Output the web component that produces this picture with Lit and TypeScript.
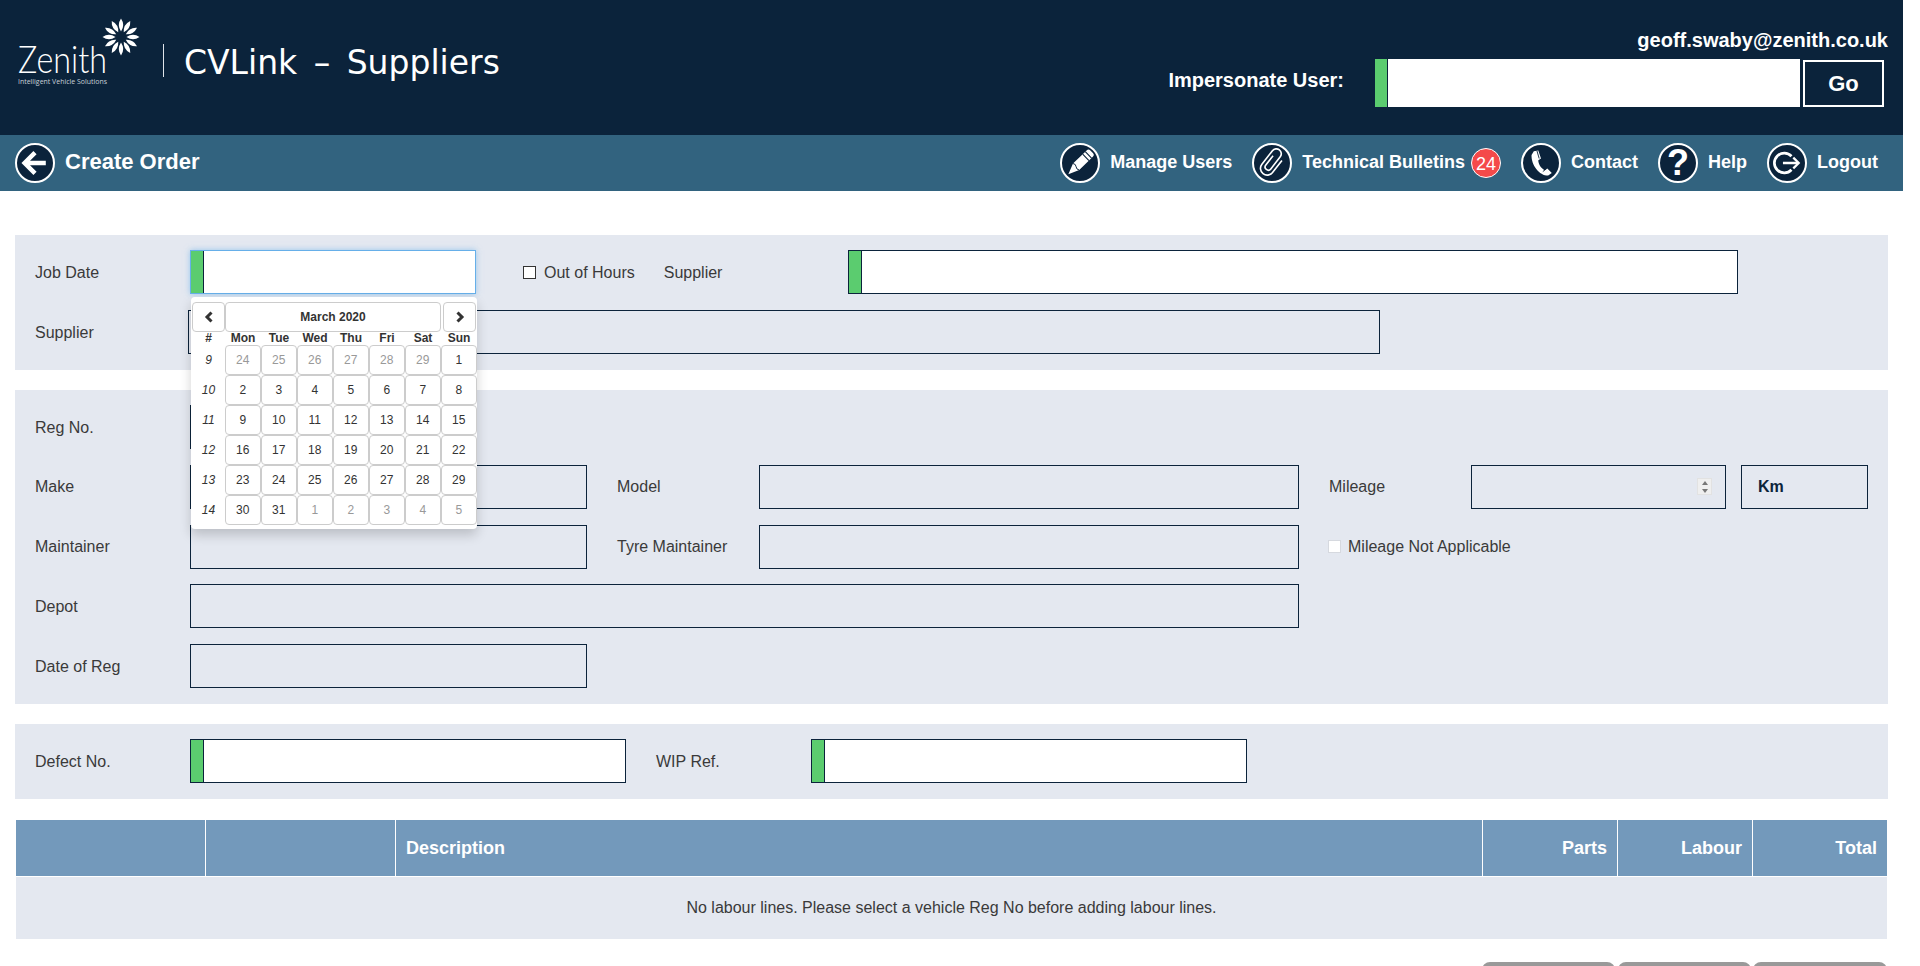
import { LitElement, css, html, svg } from "lit";
import { customElement } from "lit/decorators.js";

const navy = "#0b233b";

const icons = {
  back: svg`<path d="M20 8.500 8.500 20 20 31.500M10 20h22" fill="none" stroke="#fff" stroke-width="5"/>`,
  pencil: svg`<g transform="rotate(46 20 20)"><path d="M20 38 15 26V5q0-3 3-3h4q3 0 3 3v21z" fill="#fff"/><path d="M15 7h10M15 11h10" stroke="${navy}" stroke-width="1.200"/><path d="M15 26q2.500-2 5 0t5 0" fill="none" stroke="${navy}" stroke-width="1"/></g>`,
  clip: svg`<path transform="rotate(38 20 20)" d="M27 11v17a7.500 7.500 0 0 1-15 0V9a5.500 5.500 0 0 1 11 0v17a3.500 3.500 0 0 1-7 0V13" fill="none" stroke="#fff" stroke-width="1.800"/>`,
  phone: svg`<path d="M12 7l5-1 3 9-3 2c0 4 3 9 7 11l3-2 5 5-4 3C18 34 9 22 9.500 11z" fill="#fff"/><path d="M15.500 6.500 18 15M26 26.500l-4 3" stroke="${navy}" stroke-width="1"/>`,
  logout: svg`<path d="M25 12.500A11 11 0 1 0 25 27.500" fill="none" stroke="#fff" stroke-width="3"/><path d="M15.500 20H32" stroke="#fff" stroke-width="3"/><path d="M27 14l6 6-6 6" fill="none" stroke="#fff" stroke-width="2.500"/>`,
};

type Day = { n: number; muted?: boolean };
const weeks: { no: number; days: Day[] }[] = [
  { no: 9, days: [24, 25, 26, 27, 28, 29].map((n) => ({ n, muted: true } as Day)).concat([{ n: 1 }]) },
  { no: 10, days: [2, 3, 4, 5, 6, 7, 8].map((n) => ({ n })) },
  { no: 11, days: [9, 10, 11, 12, 13, 14, 15].map((n) => ({ n })) },
  { no: 12, days: [16, 17, 18, 19, 20, 21, 22].map((n) => ({ n })) },
  { no: 13, days: [23, 24, 25, 26, 27, 28, 29].map((n) => ({ n })) },
  {
    no: 14,
    days: [{ n: 30 }, { n: 31 }].concat([1, 2, 3, 4, 5].map((n) => ({ n, muted: true } as Day))),
  },
];

@customElement("app-root")
export class AppRoot extends LitElement {
  private icon(name: keyof typeof icons) {
    return html`<svg class="icon" viewBox="0 0 40 40">${icons[name]}</svg>`;
  }

  private logo() {
    const petals = Array.from({ length: 12 }, (_, i) => i * 30);
    return html`<svg class="logo" viewBox="0 0 125 75">
      ${petals.map(
        (a) => svg`<path d="M103 3.500Q107.400 10 103 16.500Q98.600 10 103 3.500z" fill="#fff" transform="rotate(${a} 103 22)"/>`
      )}
      <text class="zenith" x="0" y="58" textLength="89" lengthAdjust="spacingAndGlyphs">Zenith</text>
      <text class="tagline" x="0" y="69" textLength="89" lengthAdjust="spacingAndGlyphs">Intelligent Vehicle Solutions</text>
    </svg>`;
  }

  private calendar() {
    return html`<div class="cal">
      <div class="cal-top">
        <button class="cal-btn prev">
          <svg viewBox="0 0 10 12"><path d="M7.500 1.500 3 6l4.500 4.500" fill="none" stroke="#333" stroke-width="3"/></svg>
        </button>
        <button class="cal-btn month">March 2020</button>
        <button class="cal-btn next">
          <svg viewBox="0 0 10 12"><path d="M2.500 1.500 7 6l-4.500 4.500" fill="none" stroke="#333" stroke-width="3"/></svg>
        </button>
      </div>
      <div class="cal-grid">
        <span class="dow">#</span>
        ${["Mon", "Tue", "Wed", "Thu", "Fri", "Sat", "Sun"].map((d) => html`<span class="dow">${d}</span>`)}
        ${weeks.map(
          (w) => html`<span class="wk">${w.no}</span>
            ${w.days.map((d) => html`<button class="day ${d.muted ? "muted" : ""}">${d.n}</button>`)}`
        )}
      </div>
    </div>`;
  }

  render() {
    return html`
      <header class="top">
        ${this.logo()}
        <span class="rule"></span>
        <h1 class="title">CVLink – Suppliers</h1>
        <div class="account">
          <div class="email">geoff.swaby@zenith.co.uk</div>
          <div class="imp">
            <label>Impersonate User:</label>
            <div class="imp-box"><i class="imp-mark"></i><input /></div>
            <button class="go">Go</button>
          </div>
        </div>
      </header>

      <nav class="bar">
        <a class="nav first">${this.icon("back")}<b class="crumb">Create Order</b></a>
        <div class="nav-right">
          <a class="nav">${this.icon("pencil")}<b>Manage Users</b></a>
          <a class="nav">${this.icon("clip")}<b>Technical Bulletins</b><span class="badge">24</span></a>
          <a class="nav">${this.icon("phone")}<b>Contact</b></a>
          <a class="nav"><span class="icon q">?</span><b>Help</b></a>
          <a class="nav">${this.icon("logout")}<b>Logout</b></a>
        </div>
      </nav>

      <section class="panel first-panel">
        <div class="row">
          <label class="lab">Job Date</label>
          <div class="field req focus w286">
            <i class="mark"></i><input />
            ${this.calendar()}
          </div>
          <span class="check out"></span>
          <label class="check-lab">Out of Hours</label>
          <label class="lab-sup">Supplier</label>
          <div class="field req w890"><i class="mark"></i><input /></div>
        </div>
        <div class="row">
          <label class="lab short">Supplier</label>
          <div class="field w1192"><input /></div>
        </div>
      </section>

      <section class="panel vehicle">
        <div class="row">
          <label class="lab">Reg No.</label>
          <div class="field req w286"><i class="mark"></i><input /></div>
        </div>
        <div class="row">
          <label class="lab">Make</label>
          <div class="field w397"><input /></div>
          <label class="lab-mid">Model</label>
          <div class="field w540"><input /></div>
          <label class="lab-far">Mileage</label>
          <div class="field w255">
            <input />
            <span class="spin"><i class="up"></i><i class="down"></i></span>
          </div>
          <div class="unit">Km</div>
        </div>
        <div class="row">
          <label class="lab">Maintainer</label>
          <div class="field w397"><input /></div>
          <label class="lab-mid">Tyre Maintainer</label>
          <div class="field w540"><input /></div>
          <span class="check na"></span>
          <label class="check-lab">Mileage Not Applicable</label>
        </div>
        <div class="row">
          <label class="lab">Depot</label>
          <div class="field w1109"><input /></div>
        </div>
        <div class="row">
          <label class="lab">Date of Reg</label>
          <div class="field w397"><input /></div>
        </div>
      </section>

      <section class="panel">
        <div class="row">
          <label class="lab">Defect No.</label>
          <div class="field req w436"><i class="mark"></i><input /></div>
          <label class="lab-wip">WIP Ref.</label>
          <div class="field req w436"><i class="mark"></i><input /></div>
        </div>
      </section>

      <div class="lines">
        <div class="head"></div>
        <div class="head"></div>
        <div class="head">Description</div>
        <div class="head num">Parts</div>
        <div class="head num">Labour</div>
        <div class="head num">Total</div>
        <div class="empty">No labour lines. Please select a vehicle Reg No before adding labour lines.</div>
      </div>

      <div class="actions">
        <button class="act a1"></button>
        <button class="act a2"></button>
        <button class="act a3"></button>
      </div>
    `;
  }

  static styles = css`
    :host {
      --navy: #0b233b;
      display: block;
      width: 1903px;
      height: 966px;
      overflow: hidden;
      background: #fff;
      font-family: "Liberation Sans", Arial, sans-serif;
      font-size: 16px;
      color: #3a3a3a;
    }
    * {
      box-sizing: border-box;
    }

    .top {
      height: 135px;
      background: var(--navy);
      display: flex;
      align-items: flex-start;
      color: #fff;
    }
    .logo {
      width: 125px;
      height: 75px;
      margin: 15px 0 0 18px;
      flex: none;
    }
    .zenith {
      font-family: Lato, "Open Sans", sans-serif;
      font-weight: 300;
      font-size: 38px;
      fill: #fff;
    }
    .tagline {
      font-family: "Open Sans", sans-serif;
      font-size: 7px;
      fill: #c9d0d8;
    }
    .rule {
      width: 1px;
      height: 33px;
      margin: 44px 0 0 20px;
      background: #dfe4ea;
    }
    .title {
      margin: 43px 0 0 20px;
      font: 400 33px/40px "DejaVu Sans", Verdana, sans-serif;
      word-spacing: 6px;
      white-space: nowrap;
    }
    .account {
      margin-left: auto;
      padding-right: 15px;
      display: flex;
      flex-direction: column;
      align-items: flex-end;
    }
    .email {
      margin-top: 28px;
      font-size: 20px;
      font-weight: 700;
      line-height: 24px;
      height: 31px;
    }
    .imp {
      display: flex;
      align-items: center;
      margin-right: 4px;
    }
    .imp label {
      font-size: 20px;
      font-weight: 700;
      margin-right: 31px;
      padding: 0 0 5px;
    }
    .imp-box {
      width: 425px;
      height: 48px;
      display: flex;
      background: #fff;
    }
    .imp-mark {
      width: 13px;
      background: #5bcc6f;
      border-right: 1px solid var(--navy);
    }
    .imp-box input {
      flex: 1;
      min-width: 0;
      border: 0;
      outline: 0;
      background: transparent;
    }
    .go {
      width: 81px;
      height: 47px;
      margin-left: 3px;
      padding: 2px 0 0;
      border: 2px solid #fff;
      background: transparent;
      color: #fff;
      font: 700 22px "Liberation Sans", Arial, sans-serif;
    }

    .bar {
      height: 56px;
      background: #32637f;
      display: flex;
      align-items: center;
      color: #fff;
      padding: 0 25px 0 15px;
    }
    .nav-right {
      margin-left: auto;
      display: flex;
      gap: 20px;
    }
    .nav {
      display: flex;
      align-items: center;
      gap: 10px;
      font-size: 18px;
    }
    .nav b {
      padding-bottom: 2px;
    }
    .crumb {
      font-size: 22px;
    }
    .icon {
      width: 40px;
      height: 40px;
      flex: none;
      border-radius: 50%;
      border: 2px solid #fff;
      background: var(--navy);
      display: block;
    }
    .q {
      font-size: 36px;
      font-weight: 700;
      line-height: 36px;
      text-align: center;
      color: #fff;
    }
    .badge {
      width: 30px;
      height: 30px;
      margin-left: -4px;
      border-radius: 50%;
      background: #f44a4a;
      border: 1px solid #fff;
      font-size: 18px;
      line-height: 30px;
      text-align: center;
      color: #fff;
    }

    .panel {
      display: flow-root;
      margin: 20px 15px 0;
      width: 1873px;
      background: #e4e8f0;
      padding: 15px 0 0 20px;
    }
    .first-panel {
      margin-top: 44px;
    }
    .row {
      height: 44px;
      margin-bottom: 16px;
      display: flex;
      align-items: center;
    }
    .vehicle .row {
      margin-bottom: 15.750px;
    }
    label {
      padding-top: 2px;
    }
    .vehicle .row:nth-child(2) label,
    .vehicle .row:nth-child(3) label {
      padding-top: 0;
    }
    .lab {
      width: 155px;
      flex: none;
    }
    .lab.short {
      width: 153px;
    }
    .lab-mid {
      width: 142px;
      margin-left: 30px;
      flex: none;
    }
    .lab-far {
      width: 142px;
      margin-left: 30px;
      flex: none;
    }
    .lab-sup {
      width: 184px;
      margin-left: 29px;
      flex: none;
    }
    .lab-wip {
      width: 155px;
      margin-left: 30px;
      flex: none;
    }

    .field {
      position: relative;
      height: 44px;
      flex: none;
      display: flex;
      align-items: center;
      border: 1px solid var(--navy);
    }
    .field input {
      flex: 1;
      min-width: 0;
      height: 100%;
      border: 0;
      outline: 0;
      background: transparent;
    }
    .field.req {
      background: #fff;
    }
    .field.focus {
      border-color: #66afe9;
      box-shadow: 0 0 6px rgba(102, 175, 233, 0.6);
    }
    .mark {
      width: 13px;
      height: 100%;
      flex: none;
      background: #5bcc6f;
      border-right: 1px solid var(--navy);
    }
    .w286 {
      width: 286px;
    }
    .w397 {
      width: 397px;
    }
    .w436 {
      width: 436px;
    }
    .w255 {
      width: 255px;
    }
    .w540 {
      width: 540px;
    }
    .w890 {
      width: 890px;
    }
    .w1109 {
      width: 1109px;
    }
    .w1192 {
      width: 1192px;
    }

    .spin {
      width: 15px;
      height: 17px;
      margin-right: 13px;
      flex: none;
      display: flex;
      flex-direction: column;
      align-items: center;
      justify-content: space-around;
      background: #efefef;
      border: 1px solid #e2e2e2;
    }
    .spin i {
      width: 0;
      height: 0;
      border-left: 3px solid transparent;
      border-right: 3px solid transparent;
    }
    .spin .up {
      border-bottom: 4px solid #777;
    }
    .spin .down {
      border-top: 4px solid #777;
    }
    .unit {
      width: 127px;
      height: 44px;
      margin-left: 15px;
      padding-left: 16px;
      border: 1px solid var(--navy);
      color: var(--navy);
      font-weight: 700;
      line-height: 42px;
    }
    .check {
      width: 13px;
      height: 13px;
      flex: none;
      margin-right: 7px;
    }
    .check.out {
      margin-left: 47px;
      margin-right: 8px;
      background: #fff;
      border: 1px solid #333;
    }
    .check.na {
      margin-left: 29px;
      background: #fff;
      border: 1px solid #d6d9df;
    }
    .check-lab {
      flex: none;
      white-space: nowrap;
    }

    .cal {
      position: absolute;
      z-index: 5;
      top: 46px;
      left: 0;
      width: 286px;
      height: 232px;
      padding: 5px 1px 0;
      background: #fff;
      border-radius: 4px;
      box-shadow: 0 6px 12px rgba(0, 0, 0, 0.18);
      color: #333;
      font-size: 12px;
    }
    .cal button {
      padding: 0;
      background: #fff;
      color: #333;
      font-family: inherit;
      font-size: 12px;
      border: 1px solid #ccc;
      border-radius: 4px;
    }
    .cal-top {
      display: flex;
      height: 30px;
    }
    .cal .prev {
      width: 33px;
    }
    .cal .month {
      width: 216px;
      font-weight: 700;
      margin-right: 2px;
    }
    .cal .next {
      width: 33px;
    }
    .cal-btn svg {
      width: 10px;
      height: 12px;
      display: block;
      margin: auto;
    }
    .cal-grid {
      display: grid;
      grid-template-columns: 33px repeat(7, 36px);
      grid-template-rows: 13px repeat(6, 30px);
      justify-items: center;
      align-items: center;
    }
    .dow {
      font-weight: 700;
      line-height: 13px;
    }
    .wk {
      font-style: italic;
    }
    .cal .day {
      width: 35.500px;
      height: 29.500px;
      justify-self: start;
      align-self: start;
    }
    .cal .day.muted {
      color: #999;
    }

    .lines {
      margin: 21.250px 0 0 16px;
      width: 1871px;
      display: grid;
      grid-template-columns: 189px 189px 1086px 134px 134px 134px;
      grid-template-rows: 56px 62px;
      gap: 1px;
    }
    .head {
      background: #7399bb;
      color: #fff;
      font-size: 18px;
      font-weight: 700;
      line-height: 56px;
      padding: 0 10px;
    }
    .num {
      text-align: right;
    }
    .empty {
      grid-column: 1 / -1;
      background: #e4e8f0;
      text-align: center;
      line-height: 62px;
    }
    .actions {
      margin: 23px 0 0 1482px;
      display: flex;
    }
    .act {
      height: 40px;
      border: 0;
      background: #999;
      border-radius: 8px;
    }
    .a1 {
      width: 133px;
      margin-right: 3px;
    }
    .a2 {
      width: 133px;
      margin-right: 2px;
    }
    .a3 {
      width: 134px;
    }
  `;
}
